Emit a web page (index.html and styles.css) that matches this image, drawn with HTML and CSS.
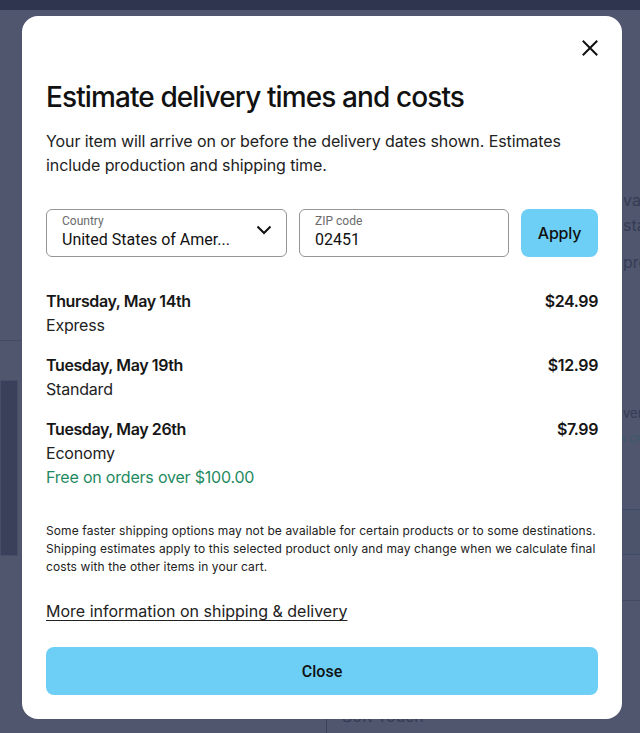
FILE: index.html
```html
<!DOCTYPE html>
<html lang="en">
<head>
<meta charset="utf-8">
<title>Estimate delivery times and costs</title>
<link rel="stylesheet" href="styles.css">
</head>
<body>
<div class="backdrop" aria-hidden="true">
  <div class="bd-topbar"></div>
  <div class="bd-line bd-line-left"></div>
  <div class="bd-image"></div>
  <div class="bd-col">
    <div class="bd-text bd-t1">va</div>
    <div class="bd-text bd-t2">sta</div>
    <div class="bd-text bd-t3">pro</div>
    <div class="bd-text bd-t4">ver</div>
    <div class="bd-text bd-t5">s ov</div>
  </div>
  <div class="bd-box"></div>
  <div class="bd-line bd-line-r3"></div>
  <div class="bd-vline"></div>
  <div class="bd-text bd-soft">Soft Touch</div>
</div>

<div class="overlay">
  <div class="modal" role="dialog" aria-labelledby="title">
    <div class="modal-top">
      <button class="close-x" aria-label="Close">
        <svg width="16" height="16" viewBox="0 0 16 16"><path d="M1.5 1.5 L14.5 14.5 M14.5 1.5 L1.5 14.5" stroke="#111" stroke-width="2" stroke-linecap="square" fill="none"/></svg>
      </button>
    </div>
    <h1 id="title" class="title">Estimate delivery times and costs</h1>
    <p class="intro">Your item will arrive on or before the delivery dates shown. Estimates include production and shipping time.</p>

    <div class="form-row">
      <div class="field field-country">
        <div class="field-text">
          <span class="field-label">Country</span>
          <span class="field-value">United States of Amer...</span>
        </div>
        <svg class="chev" width="16" height="10" viewBox="0 0 16 10"><path d="M1.5 1.5 L8 8 L14.5 1.5" stroke="#111" stroke-width="2" fill="none"/></svg>
      </div>
      <div class="field field-zip">
        <div class="field-text">
          <span class="field-label">ZIP code</span>
          <span class="field-value">02451</span>
        </div>
      </div>
      <button class="apply">Apply</button>
    </div>

    <ul class="options">
      <li class="option">
        <div class="opt-main">
          <div class="opt-date">Thursday, May 14th</div>
          <div class="opt-type">Express</div>
        </div>
        <div class="opt-price">$24.99</div>
      </li>
      <li class="option">
        <div class="opt-main">
          <div class="opt-date">Tuesday, May 19th</div>
          <div class="opt-type">Standard</div>
        </div>
        <div class="opt-price">$12.99</div>
      </li>
      <li class="option">
        <div class="opt-main">
          <div class="opt-date">Tuesday, May 26th</div>
          <div class="opt-type">Economy</div>
          <div class="opt-free">Free on orders over $100.00</div>
        </div>
        <div class="opt-price">$7.99</div>
      </li>
    </ul>

    <p class="disclaimer">Some faster shipping options may not be available for certain products or to some destinations. Shipping estimates apply to this selected product only and may change when we calculate final costs with the other items in your cart.</p>

    <a class="more-link" href="#">More information on shipping &amp; delivery</a>

    <button class="close-btn">Close</button>
  </div>
</div>
</body>
</html>
```

FILE: styles.css
```css
* { box-sizing: border-box; }

html, body {
  margin: 0;
  padding: 0;
  height: 733px;
  overflow: hidden;
}

body {
  background: #4f566d;
  font-family: Inter, "Noto Sans", sans-serif;
  color: #1a1a1a;
  position: relative;
}

/* dimmed page behind the dialog */
.backdrop {
  position: absolute;
  inset: 0;
  z-index: 0;
}
.bd-topbar {
  position: absolute;
  left: 0; top: 0; right: 0;
  height: 10px;
  background: #2f354f;
}
.bd-line {
  position: absolute;
  height: 1px;
  background: #444a62;
}
.bd-line-left { left: 0; top: 340px; width: 24px; }
.bd-image {
  position: absolute;
  left: 0; top: 380px;
  width: 18px; height: 176px;
  background: #3a405a;
  border: 1px solid #474d66;
}
.bd-col {
  position: absolute;
  left: 619px; top: 0;
  width: 21px; height: 733px;
  overflow: hidden;
}
.bd-text {
  position: absolute;
  font-family: Inter, sans-serif;
  font-size: 16px;
  color: #363c55;
  white-space: nowrap;
}
.bd-t1 { left: 4px; top: 190px; }
.bd-t2 { left: 4px; top: 215px; }
.bd-t3 { left: 4px; top: 252px; }
.bd-t4 { left: 4px; top: 405px; font-size: 13px; }
.bd-t5 { left: 0; top: 430px; font-size: 13px; color: #3d5a6a; }
.bd-box {
  position: absolute;
  left: 580px; top: 509px;
  width: 60px; height: 46px;
  border-top: 1px solid #3e4d6a;
  border-bottom: 1px solid #3e4d6a;
  background: #4c546c;
}
.bd-line-r3 { left: 580px; top: 600px; width: 60px; }
.bd-vline {
  position: absolute;
  left: 326px; top: 700px;
  width: 1px; height: 33px;
  background: #3a4058;
}
.bd-soft { left: 342px; top: 706px; color: #363c55; }

/* dialog */
.overlay {
  position: relative;
  z-index: 1;
  padding: 16px 18px 0 22px;
}

.modal {
  width: 600px;
  background: #fff;
  border-radius: 16px;
  padding: 16px 24px 24px;
  display: flex;
  flex-direction: column;
}

.modal-top {
  display: flex;
  justify-content: flex-end;
  height: 32px;
}

.close-x {
  width: 32px;
  height: 32px;
  margin-right: -8px;
  padding: 0;
  border: 0;
  background: transparent;
  display: flex;
  align-items: center;
  justify-content: center;
}

.title {
  margin: 15px 0 0;
  font-size: 28px;
  line-height: 36px;
  font-weight: 500;
  letter-spacing: -0.9px;
  color: #111;
}

.intro {
  margin: 14px 0 0;
  font-size: 16px;
  line-height: 24px;
  color: #222;
  letter-spacing: -0.1px;
}

.form-row {
  margin-top: 32px;
  display: flex;
  gap: 12px;
  height: 48px;
}

.field {
  border: 1px solid #959595;
  border-radius: 6px;
  display: flex;
  align-items: center;
  padding: 0 14px 0 15px;
  font-family: Roboto, "Noto Sans", sans-serif;
}
.field-country { width: 241px; }
.field-zip { width: 210px; }

.field-text {
  flex: 1;
  display: flex;
  flex-direction: column;
  margin-top: -2px;
}
.field-label {
  font-size: 12px;
  line-height: 14px;
  color: #6b6b6b;
}
.field-value {
  font-size: 16px;
  line-height: 22px;
  margin-top: 1px;
  color: #111;
}
.chev { flex: none; margin-top: -6px; }

.apply {
  flex: 1;
  border: 0;
  border-radius: 8px;
  background: #6dcff6;
  font-family: Inter, sans-serif;
  font-size: 16px;
  font-weight: 500;
  color: #111;
  letter-spacing: -0.2px;
}

.options {
  list-style: none;
  margin: 32px 0 0;
  padding: 0;
  display: flex;
  flex-direction: column;
  gap: 16px;
}

.option {
  display: flex;
  justify-content: space-between;
  font-size: 16px;
  line-height: 24px;
  letter-spacing: -0.2px;
}
.opt-date, .opt-price {
  font-weight: 600;
  color: #161616;
  letter-spacing: -0.4px;
}
.opt-type { color: #222; }
.opt-free { color: #1f8a5f; }

.disclaimer {
  margin: 33px 0 0;
  font-size: 12px;
  line-height: 18px;
  color: #222;
  letter-spacing: 0.1px;
}

.more-link {
  margin-top: 23px;
  font-size: 16px;
  line-height: 24px;
  color: #222;
  text-decoration: underline;
  text-underline-offset: 3px;
  text-decoration-thickness: 1px;
  align-self: flex-start;
}

.close-btn {
  margin-top: 24px;
  height: 48px;
  width: 100%;
  border: 0;
  border-radius: 8px;
  background: #6dcff6;
  font-family: Roboto, sans-serif;
  font-size: 16px;
  font-weight: 500;
  color: #111;
}
```
